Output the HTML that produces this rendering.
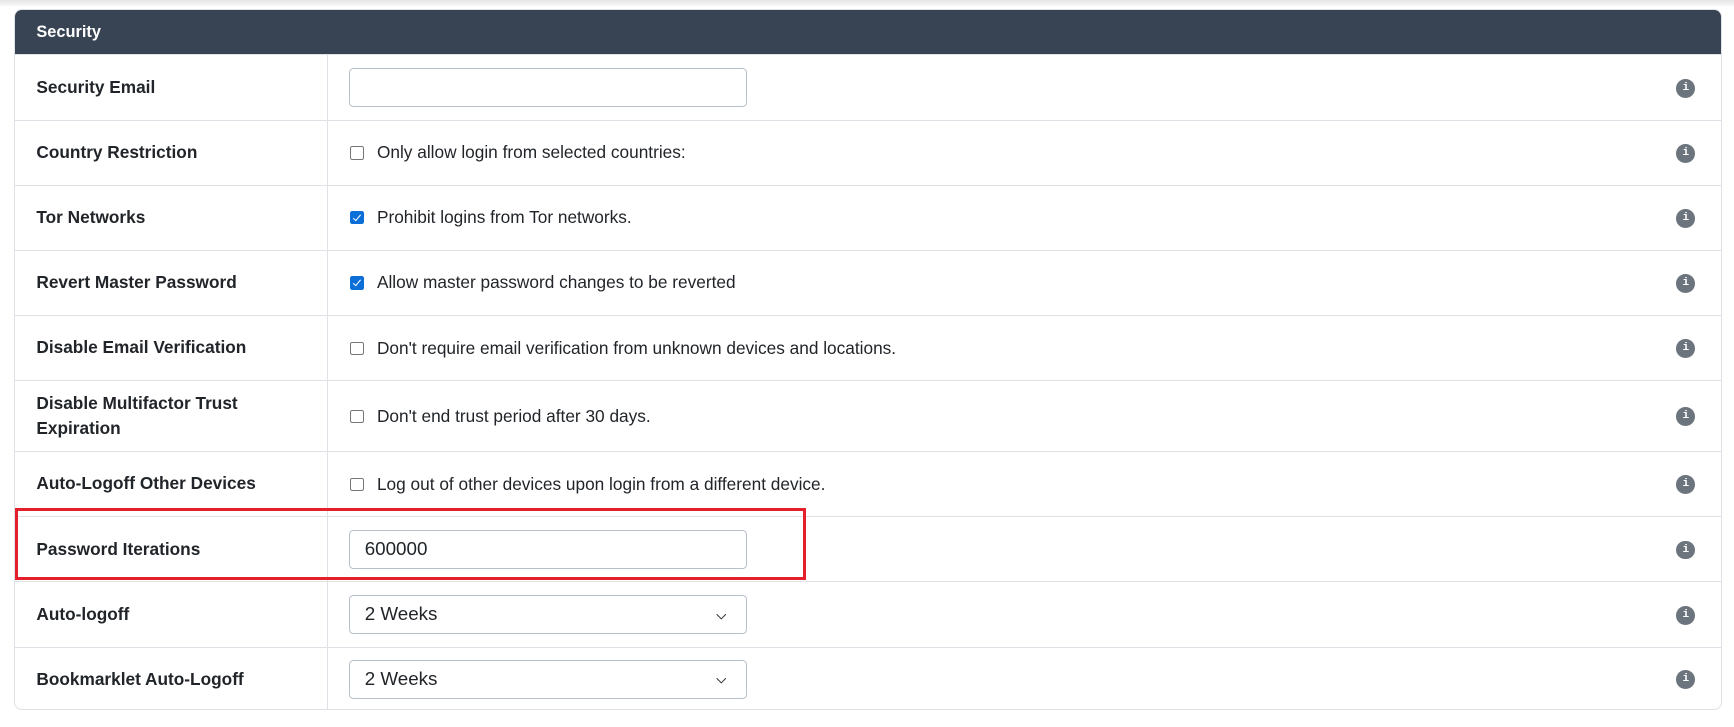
<!DOCTYPE html>
<html><head><style>
html,body{margin:0;padding:0;background:#fff;}
body{width:1568px;height:657px;zoom:1.10587;font-family:"Liberation Sans",Arial,sans-serif;position:relative;overflow:hidden;color:#212529;}
.top{position:absolute;left:0;top:0;width:1568px;height:5px;background:linear-gradient(#e6e6e6,#f7f7f7);}
.card{position:absolute;left:13px;top:8px;width:1542px;height:632px;border:1px solid #dee2e6;border-radius:7px;overflow:hidden;}
.hd{height:40px;background:#384454;color:#fff;font-weight:bold;font-size:14.8px;line-height:40px;padding-left:19px;}
.row{position:relative;border-top:1px solid #dee2e6;box-sizing:border-box;}
.row:first-of-type{border-top:none}
.lab{position:absolute;left:19px;top:0;bottom:0;width:250px;display:flex;align-items:center;font-weight:bold;font-size:15.6px;line-height:23px;}
.div{position:absolute;left:282px;top:0;bottom:0;border-left:1px solid #dee2e6;}
.ctl{position:absolute;left:302px;top:0;bottom:0;display:flex;align-items:center;font-size:15.6px;}
.inp{width:360px;height:35px;border:1px solid #b8c0cc;border-radius:4px;box-sizing:border-box;font-size:17px;padding-left:13px;line-height:33px;position:relative;}
.cb{width:12px;height:12px;border:1px solid #767676;border-radius:2px;margin-right:12px;margin-left:1px;box-sizing:border-box;}
.cb.on{background:#0b6fd7;border-color:#0b6fd7;position:relative;}
.cb.on:after{content:"";position:absolute;left:3.5px;top:0.5px;width:3px;height:6px;border:solid #fff;border-width:0 1.5px 1.5px 0;transform:rotate(40deg);}
.info{position:absolute;left:1502px;top:50%;margin-top:-8px;width:17px;height:17px;border-radius:50%;background:#6c757d;color:#fff;font:bold 10px/17px "Liberation Mono",monospace;text-align:center;}
.chev{position:absolute;right:20px;top:13px;width:5px;height:5px;border:solid #333;border-width:0 1.3px 1.3px 0;transform:rotate(45deg);}
.red{position:absolute;left:14px;top:459px;width:709px;height:60px;border:3px solid #e3202c;}
</style></head><body>
<div class="top"></div>
<div class="card">
<div class="hd">Security</div>
<div class="row" style="height:60px"><div class="lab">Security Email</div><div class="div"></div><div class="ctl"><div class="inp"></div></div><div class="info">i</div></div>
<div class="row" style="height:58px"><div class="lab">Country Restriction</div><div class="div"></div><div class="ctl"><div class="cb"></div>Only allow login from selected countries:</div><div class="info">i</div></div>
<div class="row" style="height:59px"><div class="lab">Tor Networks</div><div class="div"></div><div class="ctl"><div class="cb on"></div>Prohibit logins from Tor networks.</div><div class="info">i</div></div>
<div class="row" style="height:59px"><div class="lab">Revert Master Password</div><div class="div"></div><div class="ctl"><div class="cb on"></div>Allow master password changes to be reverted</div><div class="info">i</div></div>
<div class="row" style="height:59px"><div class="lab">Disable Email Verification</div><div class="div"></div><div class="ctl"><div class="cb"></div>Don't require email verification from unknown devices and locations.</div><div class="info">i</div></div>
<div class="row" style="height:64px"><div class="lab">Disable Multifactor Trust Expiration</div><div class="div"></div><div class="ctl"><div class="cb"></div>Don't end trust period after 30 days.</div><div class="info">i</div></div>
<div class="row" style="height:59px"><div class="lab">Auto-Logoff Other Devices</div><div class="div"></div><div class="ctl"><div class="cb"></div>Log out of other devices upon login from a different device.</div><div class="info">i</div></div>
<div class="row" style="height:59px"><div class="lab">Password Iterations</div><div class="div"></div><div class="ctl"><div class="inp">600000</div></div><div class="info">i</div></div>
<div class="row" style="height:59px"><div class="lab">Auto-logoff</div><div class="div"></div><div class="ctl"><div class="inp">2 Weeks<div class="chev"></div></div></div><div class="info">i</div></div>
<div class="row" style="height:58px"><div class="lab">Bookmarklet Auto-Logoff</div><div class="div"></div><div class="ctl"><div class="inp">2 Weeks<div class="chev"></div></div></div><div class="info">i</div></div>
</div>
<div class="red"></div>
</body></html>
